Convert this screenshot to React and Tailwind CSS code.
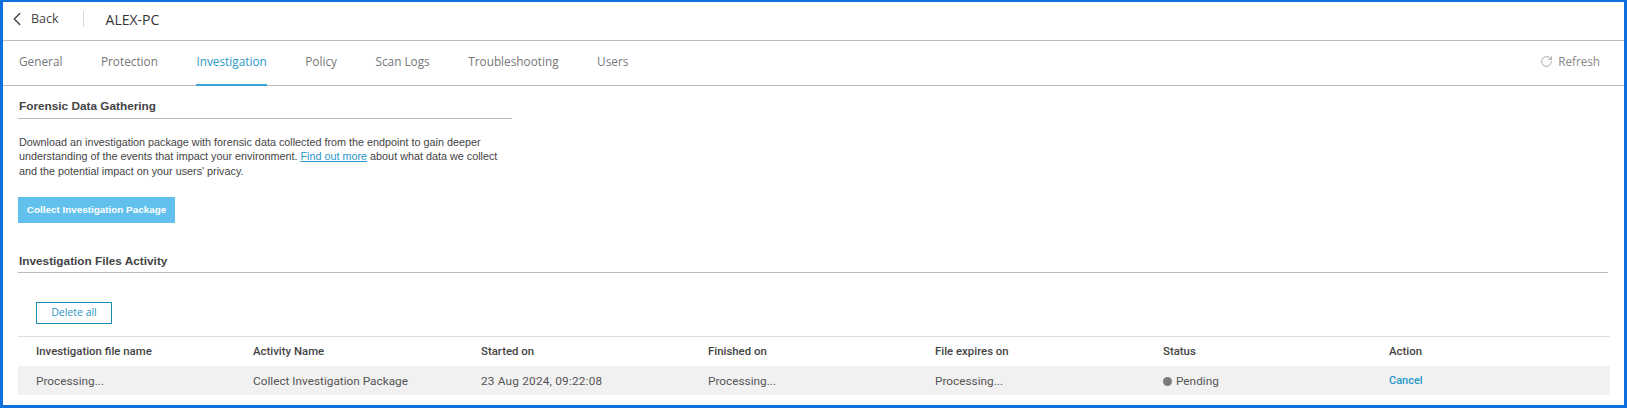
import { ChevronLeft, RotateCw } from "lucide-react";

const tabs = ["General", "Protection", "Investigation", "Policy", "Scan Logs", "Troubleshooting", "Users"];
const columns = ["Investigation file name", "Activity Name", "Started on", "Finished on", "File expires on", "Status", "Action"];
const grid = "grid grid-cols-[217px_228px_227px_227px_228px_226px_1fr] pl-[18px]";

export default function App() {
  return (
    <div className="box-border flex h-[408px] w-full flex-col overflow-hidden border-x-[3px] border-t-2 border-b-[3px] border-[#0f6fdf] bg-white font-['Open_Sans',sans-serif] text-[#555]">
      <div className="flex h-[39px] shrink-0 items-center border-b border-[#bdbdbd] pb-1">
        <ChevronLeft size={22} strokeWidth={1.5} className="ml-[3px] text-[#444]" />
        <span className="ml-[3px] text-[12.5px] text-[#444]">Back</span>
        <span className="ml-[24px] h-4 w-px bg-[#d8d8d8]" />
        <span className="ml-[22px] text-[14px] text-[#333]">ALEX-PC</span>
      </div>
      <div className="flex h-[45px] shrink-0 items-stretch justify-between border-b border-[#bdbdbd] pb-px pl-[16px] pr-[24px]">
        <div className="flex gap-[38.5px]">
          {tabs.map((t) => (
            <div
              key={t}
              className={
                t === "Investigation"
                  ? "-mb-[2px] flex items-center border-b-2 border-[#3aa3d6] pb-[1px] text-[11.8px] text-[#2a97c8]"
                  : "flex items-center pb-[2px] text-[11.8px] text-[#777]"
              }
            >
              {t}
            </div>
          ))}
        </div>
        <div className="flex items-center gap-[5px] pb-[2px] text-[11.7px] text-[#888]">
          <RotateCw size={13} strokeWidth={1.3} />
          Refresh
        </div>
      </div>
      <div className="pl-[16px]">
        <div className="-ml-px flex h-[33px] w-[494px] items-end border-b border-[#bdbdbd] pb-[2px] pl-px font-['Liberation_Sans',sans-serif] text-[11.8px] font-bold text-[#444]">
          Forensic Data Gathering
        </div>
        <p className="mt-[16px] w-[490px] font-['Liberation_Sans',sans-serif] text-[10.8px] leading-[14.4px] text-[#444]">
          Download an investigation package with forensic data collected from the endpoint to gain deeper understanding of the events that impact your environment.{" "}
          <a className="text-[#2a97c8] underline">Find out more</a> about what data we collect and the potential impact on your users' privacy.
        </p>
        <button className="-ml-px mt-[19px] block h-[26px] w-[157px] whitespace-nowrap bg-[#62c0ec] font-['Liberation_Sans',sans-serif] text-[9.9px] font-bold text-white">
          Collect Investigation Package
        </button>
        <div className="-ml-px mr-[16px] mt-[28px] flex h-[22px] items-end border-b border-[#bdbdbd] pb-[2px] pl-px font-['Liberation_Sans',sans-serif] text-[11.8px] font-bold text-[#444]">
          Investigation Files Activity
        </div>
        <button className="ml-[17px] mt-[29px] block h-[22px] w-[76px] border border-[#1b8db5] text-[10.5px] text-[#2a97c8]">
          Delete all
        </button>
      </div>
      <div className="ml-[15px] mr-[14px] mt-[12px] border-t border-[#dedede] font-['Roboto',sans-serif] text-[11.8px]">
        <div className={`${grid} h-[29px] items-center text-[11.4px] font-medium text-[#444]`}>
          {columns.map((c) => (
            <div key={c}>{c}</div>
          ))}
        </div>
        <div className={`${grid} h-[29px] items-center bg-[#f1f1f1] pt-[2px] text-[#555]`}>
          <div>Processing...</div>
          <div>Collect Investigation Package</div>
          <div className="tracking-[0.2px]">23 Aug 2024, 09:22:08</div>
          <div>Processing...</div>
          <div>Processing...</div>
          <div className="flex items-center gap-[4px]">
            <span className="h-[9px] w-[9px] rounded-full bg-[#7b7b7b]" />
            Pending
          </div>
          <div className="text-[11px] font-medium text-[#2a97c8]">Cancel</div>
        </div>
      </div>
    </div>
  );
}
